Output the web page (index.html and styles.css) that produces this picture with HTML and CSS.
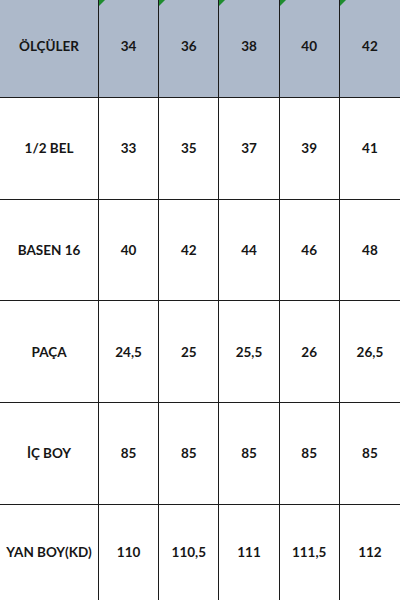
FILE: index.html
```html
<!DOCTYPE html>
<html lang="tr">
<head>
<meta charset="utf-8">
<title>Ölçü Tablosu</title>
<link rel="stylesheet" href="styles.css">
</head>
<body>
<div class="sheet">
  <div class="cell head label">ÖLÇÜLER</div>
  <div class="cell head mark">34</div>
  <div class="cell head mark">36</div>
  <div class="cell head mark">38</div>
  <div class="cell head mark">40</div>
  <div class="cell head mark last-col">42</div>

  <div class="cell label">1/2 BEL</div>
  <div class="cell">33</div>
  <div class="cell">35</div>
  <div class="cell">37</div>
  <div class="cell">39</div>
  <div class="cell last-col">41</div>

  <div class="cell label">BASEN 16</div>
  <div class="cell">40</div>
  <div class="cell">42</div>
  <div class="cell">44</div>
  <div class="cell">46</div>
  <div class="cell last-col">48</div>

  <div class="cell label">PAÇA</div>
  <div class="cell">24,5</div>
  <div class="cell">25</div>
  <div class="cell">25,5</div>
  <div class="cell">26</div>
  <div class="cell last-col">26,5</div>

  <div class="cell label">İÇ BOY</div>
  <div class="cell">85</div>
  <div class="cell">85</div>
  <div class="cell">85</div>
  <div class="cell">85</div>
  <div class="cell last-col">85</div>

  <div class="cell label last-row">YAN BOY(KD)</div>
  <div class="cell last-row">110</div>
  <div class="cell last-row">110,5</div>
  <div class="cell last-row">111</div>
  <div class="cell last-row">111,5</div>
  <div class="cell last-row last-col">112</div>
</div>
</body>
</html>
```

FILE: styles.css
```css
html, body {
  margin: 0;
  padding: 0;
  background: #ffffff;
}

.sheet {
  width: 400px;
  height: 600px;
  display: grid;
  grid-template-columns: 99px repeat(5, 1fr);
  grid-template-rows: 97.75px repeat(4, 101.75px) 1fr;
  font-family: Lato, "Open Sans", "DejaVu Sans", sans-serif;
  font-weight: 700;
  font-size: 13.5px;
  color: #161616;
  overflow: hidden;
}

.cell {
  box-sizing: border-box;
  display: flex;
  align-items: center;
  justify-content: center;
  border-right: 1.5px solid #1c1c1c;
  border-bottom: 1.5px solid #1c1c1c;
  white-space: nowrap;
}

.head {
  background: #adb9ca;
  position: relative;
  padding-bottom: 4px;
}

.mark::before {
  content: "";
  position: absolute;
  top: 0;
  left: 0;
  width: 0;
  height: 0;
  border-top: 6px solid #1f8c2f;
  border-right: 6px solid transparent;
}

.last-col {
  border-right: none;
}

.last-row {
  border-bottom: none;
}
```
